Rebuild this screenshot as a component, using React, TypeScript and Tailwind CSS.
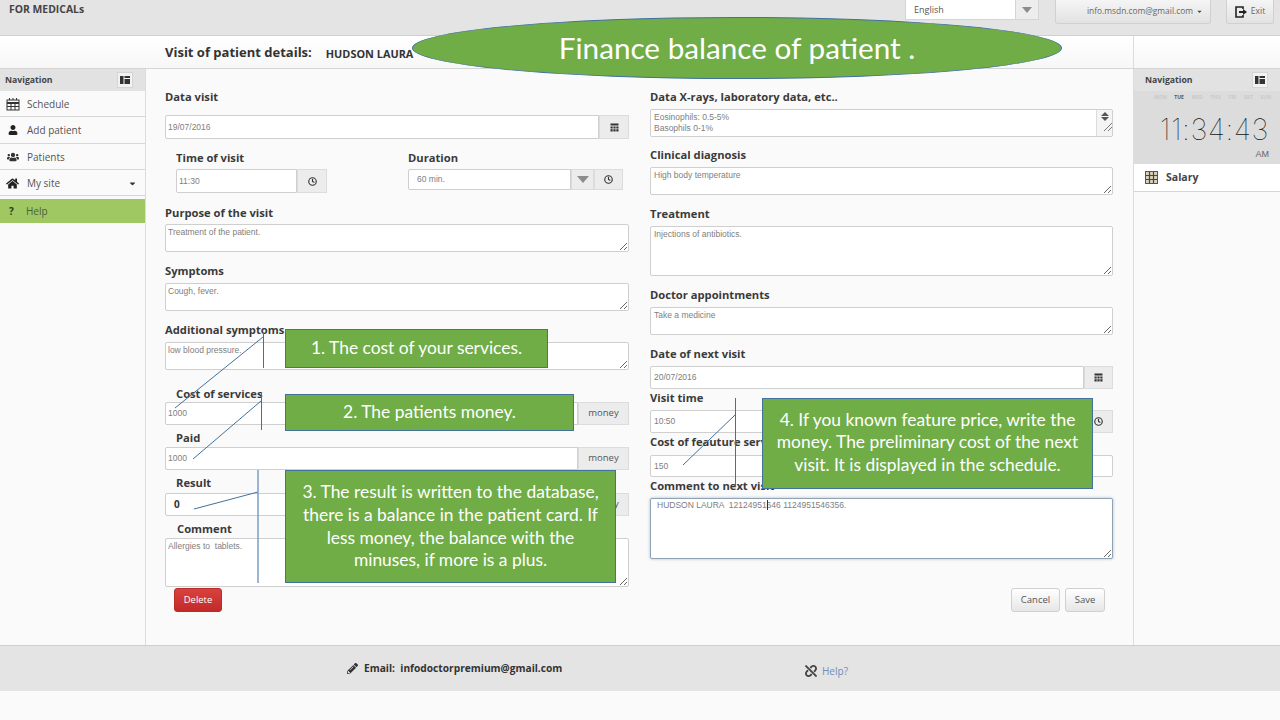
import { Clock } from "lucide-react";
import { FaCaretDown, FaHome, FaPencilAlt, FaUnlink, FaUser, FaUsers } from "react-icons/fa";

const Label = ({ text, className = "" }: { text: string; className?: string }) => (
  <div className={`h-[14px] text-[11.2px] leading-[15px] font-bold text-[#3a3a3a] whitespace-nowrap ${className}`}>{text}</div>
);

const Input = ({ value, className = "", dark = false }: { value: string; className?: string; dark?: boolean }) => (
  <div className={`flex-1 bg-white border border-[#cfcfcf] rounded-l-[2px] pl-[3px] flex items-center font-['Liberation_Sans',sans-serif] text-[8.5px] ${dark ? "pl-[8px] font-bold text-[#333] font-['Open_Sans',sans-serif] text-[10px]" : "text-[#808080]"} ${className}`}>
    {value}
  </div>
);

const Area = ({ value, className = "" }: { value: string; className?: string }) => (
  <textarea
    readOnly
    defaultValue={value}
    className={`block w-full bg-white border border-[#cfcfcf] rounded-[2px] px-[3px] py-[2px] font-['Liberation_Sans',sans-serif] text-[8.5px] leading-[11px] text-[#808080] outline-none ${className}`}
  />
);

const AddOn = ({ children, className = "" }: { children: React.ReactNode; className?: string }) => (
  <div className={`h-full bg-[#ececec] border border-[#dcdcdc] flex items-center justify-center text-[9.5px] text-[#555] ${className}`}>{children}</div>
);

const CalendarGlyph = () => (
  <svg width="9" height="9" viewBox="0 0 9 9" fill="#333">
    <rect x="0.5" y="0.5" width="8" height="2" />
    <rect x="0.5" y="3.5" width="2.2" height="2" />
    <rect x="3.4" y="3.5" width="2.2" height="2" />
    <rect x="6.3" y="3.5" width="2.2" height="2" />
    <rect x="0.5" y="6.2" width="2.2" height="2.3" />
    <rect x="3.4" y="6.2" width="2.2" height="2.3" />
    <rect x="6.3" y="6.2" width="2.2" height="2.3" />
  </svg>
);

const ScheduleGlyph = () => (
  <svg width="14" height="13" viewBox="0 0 14 13" fill="none" stroke="#333" strokeWidth="1">
    <path d="M3.5 0v2M7 0v2M10.5 0v2" />
    <rect x="1" y="2" width="12" height="10" />
    <path d="M1 5h12" strokeWidth="2" />
    <path d="M1 8.5h12M5 5v7M9 5v7" />
  </svg>
);

const PanelGlyph = () => (
  <svg width="10" height="8" viewBox="0 0 10 8" fill="#333">
    <rect x="0" y="0" width="3.5" height="8" />
    <rect x="4.5" y="0" width="5.5" height="2" />
    <rect x="4.5" y="3" width="5.5" height="5" />
  </svg>
);

const SalaryGlyph = () => (
  <svg width="13" height="13" viewBox="0 0 13 13">
    <rect x="0.5" y="0.5" width="12" height="12" fill="#d9d2bd" stroke="#555" />
    <path d="M4.5 1v11M8.5 1v11M1 4.5h11M1 8.5h11" stroke="#444" strokeWidth="1.2" />
  </svg>
);

const ExitGlyph = () => (
  <svg width="12" height="12" viewBox="0 0 12 12" fill="none" stroke="#222">
    <path d="M8 3V1H1v10h7V9" strokeWidth="1.6" />
    <path d="M4 6h5" strokeWidth="2" />
    <path d="M8 3l4 3-4 3z" fill="#222" stroke="none" />
  </svg>
);

const NavHeader = ({ inset }: { inset: string }) => (
  <div className="h-[22px] bg-[#e2e2e2] flex items-center justify-between text-[8.7px] font-bold text-[#444]">
    <span className={`${inset} pt-[2px]`}>Navigation</span>
    <span className="w-[16px] h-[16px] mr-[12px] bg-[#f2f2f2] border border-[#d5d5d5] flex items-center justify-center"><PanelGlyph /></span>
  </div>
);

const navItems = [
  { label: "Schedule", icon: <ScheduleGlyph />, h: "h-[26px] pt-[1px]" },
  { label: "Add patient", icon: <FaUser size={10} color="#222" />, h: "h-[27px]" },
  { label: "Patients", icon: <FaUsers size={12} color="#333" />, h: "h-[26px] pt-[1px]" },
  { label: "My site", icon: <FaHome size={13} color="#222" />, h: "h-[26px] pt-[2px]", caret: true },
];

const Sidebar = () => (
  <aside className="w-[146px] shrink-0 border-r border-[#dcdcdc]">
    <NavHeader inset="ml-[5px]" />
    {navItems.map((item) => (
      <div key={item.label} className={`${item.h} flex items-center border-b border-[#d6d6d6] text-[10px] text-[#555]`}>
        <span className="w-[27px] flex justify-center pl-[1px] pr-[3px]">{item.icon}</span>
        <span>{item.label}</span>
        {item.caret && <FaCaretDown size={9} color="#333" className="ml-auto mr-[8px]" />}
      </div>
    ))}
    <div className="mt-[3px] h-[24px] bg-[#9fc863] flex items-center text-[10px] text-[#4d5f38]">
      <span className="w-[26px] pl-[9px] font-bold text-[#2c3a1c]">?</span>
      <span>Help</span>
    </div>
  </aside>
);

const LeftColumn = () => (
  <div className="w-[464px] pt-[20px]">
    <Label text="Data visit" />
    <div className="mt-[12px] h-[24px] flex">
      <Input value="19/07/2016" className="!pl-[2px]" />
      <AddOn className="w-[30px]"><CalendarGlyph /></AddOn>
    </div>

    <div className="mt-[11px] flex pl-[11px]">
      <div className="w-[232px]">
        <Label text="Time of visit" />
        <div className="mt-[5px] h-[24px] w-[151px] flex">
          <Input value="11:30" className="!pl-[2px]" />
          <AddOn className="w-[30px]"><Clock size={9} color="#333" strokeWidth={3} /></AddOn>
        </div>
      </div>
      <div className="w-[215px]">
        <Label text="Duration" />
        <div className="mt-[5px] h-[21px] flex">
          <Input value="60 min." className="!pl-[8px]" />
          <AddOn className="w-[23px]">
            <span className="w-0 h-0 border-x-[6px] border-x-transparent border-t-[7px] border-t-[#8c8c8c]" />
          </AddOn>
          <AddOn className="w-[29px]"><Clock size={9} color="#333" strokeWidth={3} /></AddOn>
        </div>
      </div>
    </div>

    <Label text="Purpose of the visit" className="mt-[12px]" />
    <Area value="Treatment of the patient." className="mt-[5px] h-[28px] !px-[2px]" />
    <Label text="Symptoms" className="mt-[11px]" />
    <Area value="Cough, fever." className="mt-[6px] h-[28px] !px-[2px]" />
    <Label text="Additional symptoms" className="mt-[11px]" />
    <Area value="low blood pressure." className="mt-[6px] h-[28px] !px-[2px]" />

    <Label text="Cost of services" className="mt-[16px] ml-[11px]" />
    <div className="mt-[2px] h-[23px] flex">
      <Input value="1000" className="!pl-[2px]" />
      <AddOn className="w-[51px]">money</AddOn>
    </div>
    <Label text="Paid" className="mt-[5px] ml-[11px]" />
    <div className="mt-[3px] h-[23px] flex">
      <Input value="1000" className="!pl-[2px]" />
      <AddOn className="w-[51px]">money</AddOn>
    </div>
    <Label text="Result" className="mt-[5px] ml-[11px]" />
    <div className="mt-[4px] h-[23px] flex">
      <Input value="0" dark />
      <AddOn className="w-[51px]">money</AddOn>
    </div>
    <Label text="Comment" className="mt-[5px] ml-[12px]" />
    <Area value="Allergies to  tablets." className="mt-[3px] h-[49px] !px-[2px]" />

    <button className="mt-[1px] ml-[9px] block w-[48px] h-[24px] rounded-[3px] bg-gradient-to-b from-[#d9413f] to-[#c12a28] border border-[#b92c2a] text-[9.5px] text-white">
      Delete
    </button>
  </div>
);

const RightColumn = () => (
  <div className="w-[463px] pt-[20px]">
    <Label text="Data X-rays, laboratory data, etc.." />
    <div className="relative mt-[6px] h-[28px] bg-white border border-[#cfcfcf] rounded-[2px] pl-[3px] font-['Liberation_Sans',sans-serif] text-[8.5px] leading-[11px] text-[#808080]">
      <div className="pt-[2px]">Eosinophils: 0.5-5%</div>
      <div>Basophils 0-1%</div>
      <div className="absolute right-0 top-0 bottom-0 w-[16px] bg-[#f4f4f4] border-l border-[#dcdcdc] flex flex-col items-center pt-[2px] gap-[1px]">
        <span className="w-0 h-0 border-x-[4px] border-x-transparent border-b-[4px] border-b-[#555]" />
        <span className="w-0 h-0 border-x-[4px] border-x-transparent border-t-[4px] border-t-[#555]" />
        <svg width="8" height="8" viewBox="0 0 8 8" stroke="#777" className="mt-[1px] ml-[6px]"><path d="M0 8 8 0M4 8l4-4" /></svg>
      </div>
    </div>
    <Label text="Clinical diagnosis" className="mt-[10px]" />
    <Area value="High body temperature" className="mt-[6px] h-[28px]" />
    <Label text="Treatment" className="mt-[11px]" />
    <Area value="Injections of antibiotics." className="mt-[6px] h-[50px]" />
    <Label text="Doctor appointments" className="mt-[11px]" />
    <Area value="Take a medicine" className="mt-[6px] h-[28px]" />
    <Label text="Date of next visit" className="mt-[11px]" />
    <div className="mt-[6px] h-[23px] flex">
      <Input value="20/07/2016" />
      <AddOn className="w-[29px]"><CalendarGlyph /></AddOn>
    </div>
    <Label text="Visit time" className="mt-[1px]" />
    <div className="mt-[6px] h-[23px] flex">
      <Input value="10:50" />
      <AddOn className="w-[29px]"><Clock size={9} color="#333" strokeWidth={3} /></AddOn>
    </div>
    <Label text="Cost of feauture services" className="mt-[1px]" />
    <div className="mt-[7px] h-[22px] flex">
      <Input value="150" className="rounded-r-[2px]" />
    </div>
    <Label text="Comment to next visit" className="mt-[1px]" />
    <div className="relative mt-[6px]">
      <Area
        value="HUDSON LAURA  12124951646 1124951546356."
        className="h-[61px] !border-[#8fa3b5] !px-[6px] !py-[1px] shadow-[0_0_3px_rgba(82,120,160,0.5)]"
      />
      <span className="absolute left-[117px] top-[2px] w-px h-[10px] bg-[#333]" />
    </div>
    <div className="mt-[29px] mr-[8px] flex justify-end gap-[5px]">
      <button className="w-[49px] h-[24px] rounded-[3px] bg-gradient-to-b from-white to-[#e6e6e6] border border-[#d0d0d0] text-[9.5px] text-[#555]">Cancel</button>
      <button className="w-[40px] h-[24px] rounded-[3px] bg-gradient-to-b from-white to-[#e6e6e6] border border-[#d0d0d0] text-[9.5px] text-[#555]">Save</button>
    </div>
  </div>
);

const RightPanel = () => (
  <aside className="w-[147px] shrink-0 overflow-hidden border-l border-[#dcdcdc]">
    <NavHeader inset="ml-[11px]" />
    <div className="h-[73px] bg-[#dcdcdc]">
      <div className="pt-[3px] pl-[20px] pr-[9px] flex justify-between text-[5px] font-bold text-[#c9c9c9]">
        <span>MON</span><span className="text-[#555]">TUE</span><span>WED</span><span>THU</span><span>FRI</span><span>SAT</span><span>SUN</span>
      </div>
      <div className="mt-[13px] pr-[11px] text-right font-['Inter',sans-serif] font-thin text-[29px] leading-[30px] tracking-[0.5px] text-[#111]">11:34:43</div>
      <div className="mt-[3px] pr-[11px] text-right text-[9px] leading-[12px] text-[#666] font-['Liberation_Sans',sans-serif]">AM</div>
    </div>
    <div className="h-[28px] bg-white border-b border-[#d6d6d6] flex items-center pl-[11px] gap-[8px] text-[10.5px] font-bold text-[#444]">
      <SalaryGlyph />
      <span>Salary</span>
    </div>
  </aside>
);

const Callout = ({ className, children }: { className: string; children: React.ReactNode }) => (
  <div className={`absolute bg-[#70ad47] border border-[#41719c] flex items-center justify-center text-center font-['Lato',sans-serif] text-white ${className}`}>
    {children}
  </div>
);

const Annotations = () => (
  <>
    <svg className="absolute left-0 top-0 pointer-events-none" width="1280" height="720" fill="none" stroke="#41719c">
      <path d="M263.5 333V368M263 337 175 408M261.5 392V430M261 401 193 459M683 465 735 415M735.5 398V487M258 492 194 509" />
      <path d="M258 470V583" stroke="#7b9cc2" strokeWidth="1.5" />
    </svg>
    <div className="absolute left-[412px] top-[17px] w-[650px] h-[62px] rounded-[50%] bg-[#70ad47] border border-[#41719c] flex items-center justify-center font-['Lato',sans-serif] text-[29.7px] text-white">
      Finance balance of patient .
    </div>
    <Callout className="left-[285px] top-[329px] w-[263px] h-[39px] text-[17.4px]">1. The cost of your services.</Callout>
    <Callout className="left-[285px] top-[394px] w-[289px] h-[37px] text-[17.4px]">2. The patients money.</Callout>
    <Callout className="left-[285px] top-[470px] w-[331px] h-[113px] text-[17.4px] leading-[22.6px] px-[10px]">
      3. The result is written to the database, there is a balance in the patient card. If less money, the balance with the minuses, if more is a plus.
    </Callout>
    <Callout className="left-[762px] top-[398px] w-[331px] h-[91px] text-[17.4px] leading-[22.6px] px-[10px] pb-[2px]">
      4. If you known feature price, write the money. The preliminary cost of the next visit. It is displayed in the schedule.
    </Callout>
  </>
);

export default function App() {
  return (
    <div className="relative w-[1280px] h-[720px] overflow-hidden bg-[#fafafa] font-['Open_Sans',sans-serif]">
      <header className="h-[36px] bg-[#e4e4e4] border-b border-[#cfcfcf] flex items-start">
        <div className="pl-[9px] pt-[2px] text-[10.4px] font-bold text-[#444]">FOR MEDICALs</div>
        <div className="ml-auto w-[134px] h-[20px] bg-white border border-[#d5d5d5] border-t-0 flex mr-[16px]">
          <span className="flex-1 pl-[8px] text-[9px] leading-[19px] text-[#555]">English</span>
          <span className="w-[23px] bg-[#ededed] border-l border-[#d5d5d5] flex items-center justify-center">
            <span className="w-0 h-0 border-x-[5px] border-x-transparent border-t-[6px] border-t-[#8c8c8c]" />
          </span>
        </div>
        <div className="w-[156px] h-[24px] rounded-b-[3px] bg-gradient-to-b from-[#f5f5f5] to-[#e2e2e2] border border-[#d0d0d0] border-t-0 flex items-center justify-end pr-[7px] gap-[3px] text-[8.4px] text-[#666] mr-[15px]">
          info.msdn.com@gmail.com
          <FaCaretDown size={7} color="#444" />
        </div>
        <div className="w-[48px] h-[24px] rounded-b-[3px] bg-gradient-to-b from-[#f5f5f5] to-[#e2e2e2] border border-[#d0d0d0] border-t-0 flex items-center justify-center gap-[4px] text-[8.5px] text-[#666] mr-[6px]">
          <ExitGlyph />
          Exit
        </div>
      </header>

      <div className="h-[33px] bg-gradient-to-b from-white to-[#f7f7f7] border-b border-[#d5d5d5] flex">
        <div className="w-[1133px] pl-[165px] pt-[2px] flex items-center gap-[14px] font-bold text-[#333]">
          <span className="text-[13px]">Visit of patient details:</span>
          <span className="text-[10.9px] pt-[2px]">HUDSON LAURA</span>
        </div>
        <div className="flex-1 border-l border-[#dcdcdc]" />
      </div>

      <main className="h-[576px] flex">
        <Sidebar />
        <div className="w-[987px] shrink-0 pl-[19px] flex gap-[21px]">
          <LeftColumn />
          <RightColumn />
        </div>
        <RightPanel />
      </main>

      <footer className="h-[46px] bg-[#e4e4e4] border-t border-[#cfcfcf] flex items-center">
        <div className="ml-[347px] w-[458px] flex items-center gap-[6px] text-[10.2px] font-bold text-[#333] mt-[1px]">
          <FaPencilAlt size={11} color="#333" />
          <span>Email:&nbsp; infodoctorpremium@gmail.com</span>
        </div>
        <div className="flex items-center gap-[5px] text-[10px] text-[#6f8fb8] mt-[5px]">
          <FaUnlink size={12} color="#444" />
          Help?
        </div>
      </footer>

      <Annotations />
    </div>
  );
}
